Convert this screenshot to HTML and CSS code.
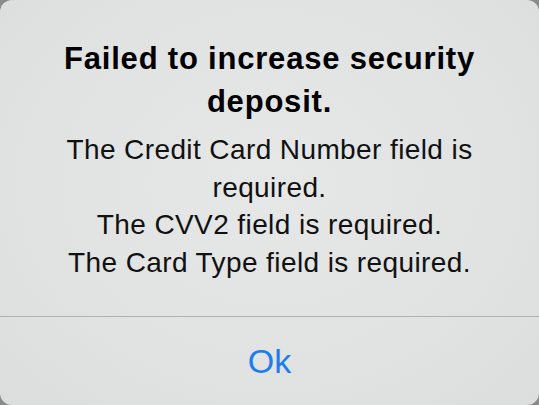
FILE: index.html
```html
<!DOCTYPE html>
<html lang="en">
<head>
    <meta charset="UTF-8">
    <meta name="viewport" content="width=device-width, initial-scale=1.0">
    <title>Alert</title>
    <link rel="stylesheet" href="styles.css">
</head>
<body>
    <div class="alert">
        <div class="alert-content">
            <h1 class="alert-title">Failed to increase security deposit.</h1>
            <p class="alert-message">The Credit Card Number field is required.</p>
            <p class="alert-message">The CVV2 field is required.</p>
            <p class="alert-message">The Card Type field is required.</p>
        </div>
        <div class="alert-actions">
            <button class="alert-button">Ok</button>
        </div>
    </div>
</body>
</html>
```

FILE: styles.css
```css
html, body {
    margin: 0;
    padding: 0;
    background-color: #8b8b8b;
}

body {
    font-family: "Liberation Sans", Arial, sans-serif;
}

.alert {
    width: 539px;
    height: 405px;
    display: flex;
    flex-direction: column;
    border-radius: 12px;
    overflow: hidden;
    background: radial-gradient(ellipse at 50% 45%, #e6e7e7 0%, #e1e2e2 60%, #dcdddd 100%);
}

.alert-content {
    flex: 1;
    padding: 37px 30px 0;
    text-align: center;
}

.alert-title {
    margin: 0 0 8px;
    font-size: 31px;
    line-height: 43px;
    letter-spacing: 0.8px;
    font-weight: bold;
    color: #000;
}

.alert-message {
    margin: 0;
    font-size: 28px;
    line-height: 37.5px;
    letter-spacing: 0.4px;
    color: #111;
}

.alert-actions {
    height: 88px;
    border-top: 1px solid #b2b2b2;
    display: flex;
    align-items: center;
    justify-content: center;
}

.alert-button {
    background: none;
    border: none;
    padding: 0;
    font-family: "Liberation Sans", Arial, sans-serif;
    font-size: 34px;
    color: #1a7ef0;
    cursor: pointer;
}
```
